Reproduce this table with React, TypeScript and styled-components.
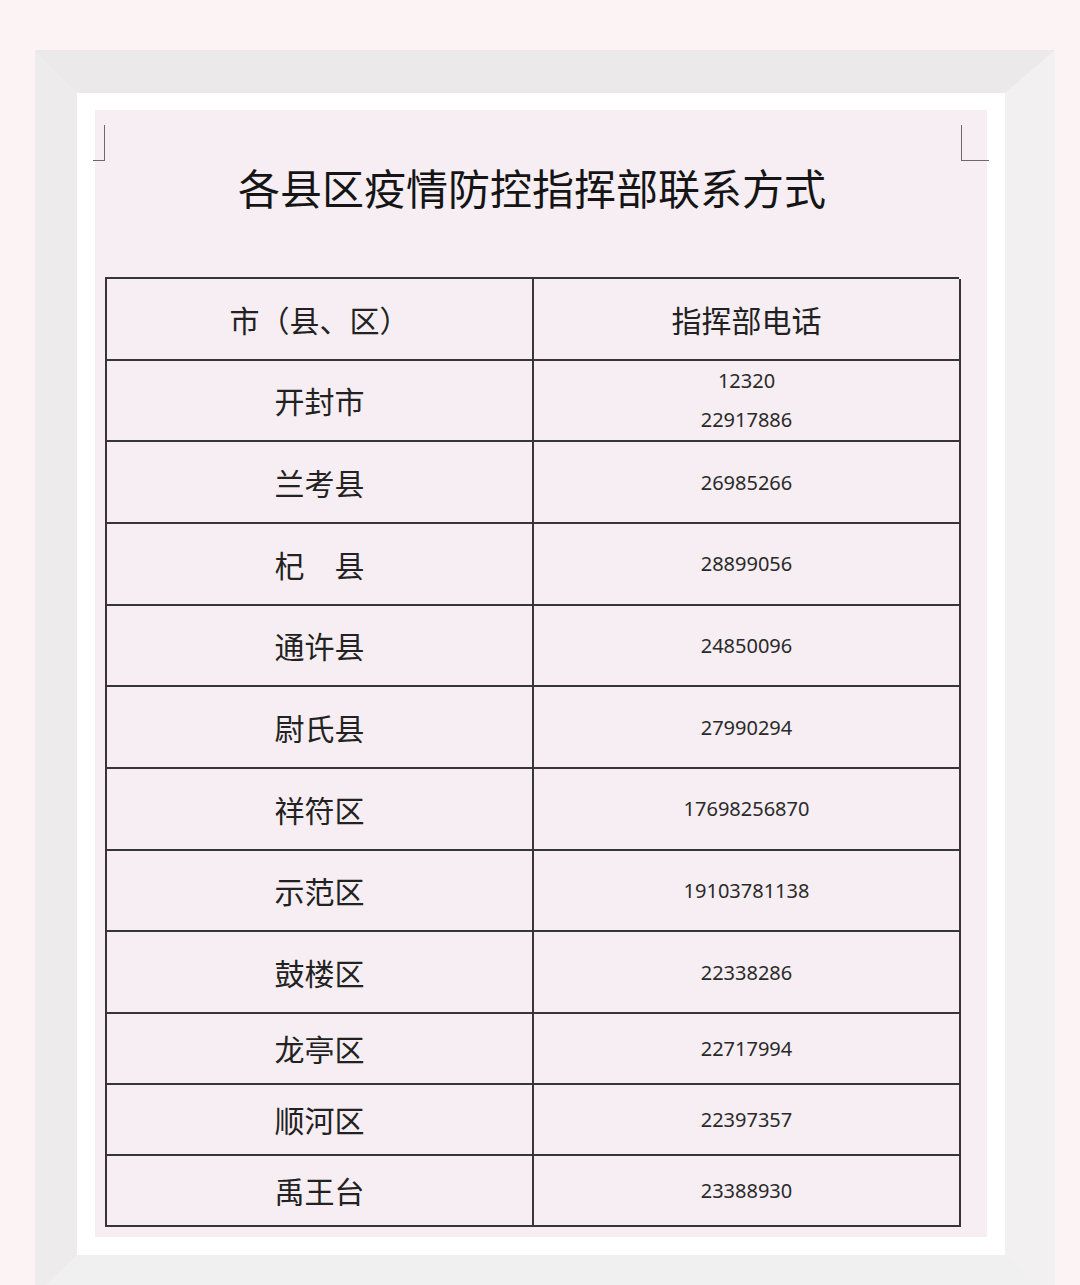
import React from "react";
import styled, { createGlobalStyle } from "styled-components";

interface Row {
  name: string;
  phones: string[];
}

const rows: Row[] = [
  { name: "开封市", phones: ["12320", "22917886"] },
  { name: "兰考县", phones: ["26985266"] },
  { name: "杞　县", phones: ["28899056"] },
  { name: "通许县", phones: ["24850096"] },
  { name: "尉氏县", phones: ["27990294"] },
  { name: "祥符区", phones: ["17698256870"] },
  { name: "示范区", phones: ["19103781138"] },
  { name: "鼓楼区", phones: ["22338286"] },
  { name: "龙亭区", phones: ["22717994"] },
  { name: "顺河区", phones: ["22397357"] },
  { name: "禹王台", phones: ["23388930"] },
];

const GlobalStyle = createGlobalStyle`
  html, body {
    margin: 0;
    padding: 0;
    background: #fcf4f4;
  }
  * {
    box-sizing: border-box;
  }
`;

const App: React.FC = () => {
  return (
    <Page>
      <GlobalStyle />
      <Frame>
        <Mat>
          <Paper>
            <Corner side="left" />
            <Corner side="right" />
            <Title>各县区疫情防控指挥部联系方式</Title>
            <Grid>
              <Cell>
                <Name>市（县、区）</Name>
              </Cell>
              <Cell>
                <Name>指挥部电话</Name>
              </Cell>
              {rows.map((r) => (
                <React.Fragment key={r.name}>
                  <Cell>
                    <Name>{r.name}</Name>
                  </Cell>
                  <Cell>
                    {r.phones.map((p) => (
                      <Phone key={p}>{p}</Phone>
                    ))}
                  </Cell>
                </React.Fragment>
              ))}
            </Grid>
          </Paper>
        </Mat>
      </Frame>
    </Page>
  );
};

const Page = styled.div`
  height: 1285px;
  overflow: hidden;
  padding: 50px 25px 0 35px;
  background: #fcf4f4;
`;

const Frame = styled.div`
  width: 1020px;
  border-style: solid;
  border-color: #ebe9e9 #f2f0f0 #f1f0f0 #edebeb;
  border-width: 43px 50px 40px 42px;
`;

const Mat = styled.div`
  background: #ffffff;
  padding: 17px 18px 18px 18px;
`;

const Paper = styled.div`
  position: relative;
  background: #f6eef3;
  height: 1127px;
  padding: 47px 28px 0 10px;
  display: flex;
  flex-direction: column;
  font-family: "Noto Sans CJK SC", "Noto Sans", sans-serif;
  color: #222;
`;

const Corner = styled.div<{ side: "left" | "right" }>`
  position: absolute;
  top: 15px;
  height: 36px;
  ${(p) =>
    p.side === "left"
      ? `left: -2px; width: 12px; border-right: 1px solid #6a6a6a; border-bottom: 1px solid #6a6a6a;`
      : `left: 866px; width: 28px; border-left: 1px solid #6a6a6a; border-bottom: 1px solid #6a6a6a;`}
`;

const Title = styled.h1`
  margin: 0 0 60px;
  height: 60px;
  line-height: 60px;
  text-align: center;
  font-size: 42px;
  font-weight: 400;
  color: #151515;
`;

const Grid = styled.div`
  width: 854px;
  display: grid;
  grid-template-columns: 427px 427px;
  grid-template-rows: repeat(9, 81.67px) repeat(3, 71px);
  border-top: 2px solid #363636;
  border-left: 2px solid #363636;
`;

const Cell = styled.div`
  display: flex;
  flex-direction: column;
  align-items: center;
  justify-content: center;
  border-bottom: 2px solid #363636;
  border-right: 2px solid #363636;
`;

const Name = styled.span`
  font-size: 30px;
  line-height: 1;
  color: #222;
`;

const Phone = styled.span`
  font-family: "Noto Sans", "Noto Sans CJK SC", sans-serif;
  font-size: 20px;
  line-height: 39px;
  color: #2a2a2a;
`;

export default App;
